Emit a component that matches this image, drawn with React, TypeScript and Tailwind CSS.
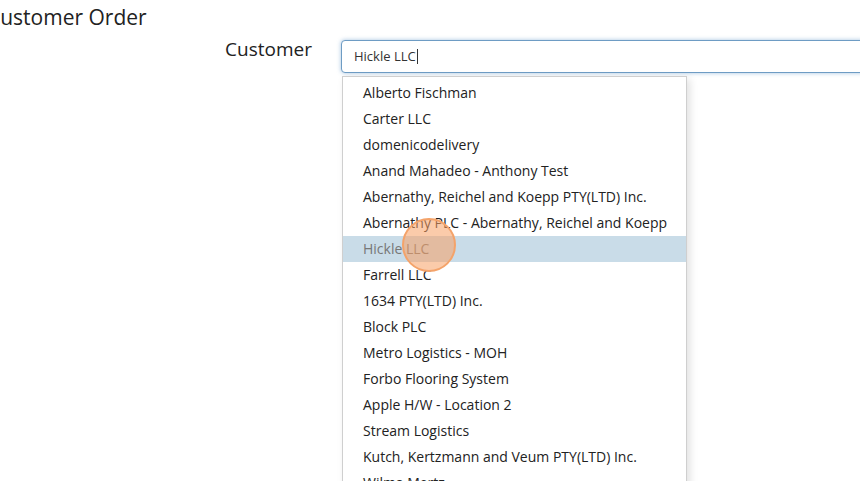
import React from 'react';

const customers = [
  'Alberto Fischman',
  'Carter LLC',
  'domenicodelivery',
  'Anand Mahadeo - Anthony Test',
  'Abernathy, Reichel and Koepp PTY(LTD) Inc.',
  'Abernathy PLC - Abernathy, Reichel and Koepp',
  'Hickle LLC',
  'Farrell LLC',
  '1634 PTY(LTD) Inc.',
  'Block PLC',
  'Metro Logistics - MOH',
  'Forbo Flooring System',
  'Apple H/W - Location 2',
  'Stream Logistics',
  'Kutch, Kertzmann and Veum PTY(LTD) Inc.',
  'Wilms-Mertz',
  'Greenholt Group',
];

export default function App() {
  return (
    <div className="relative h-[481px] w-[860px] overflow-hidden bg-white text-[#333] font-['Open_Sans',sans-serif]">
      {/* Title */}
      <h1 className="-ml-[13px] pt-[3px] text-[21px] leading-[28px] text-[#222]">Customer Order</h1>

      {/* Form row */}
      <div className="mt-[9px] flex items-start">
        <label className="w-[312px] shrink-0 text-right text-[19px] leading-[18px] text-[#222]">Customer</label>
        <div className="relative ml-[29px] shrink-0">
          <div className="flex h-[33px] w-[560px] items-center rounded-[4px] border border-[#6e9cc4] bg-white px-[12px] text-[13px] text-[#333] shadow-[0_0_4px_rgba(102,153,204,0.6)]">
            <span>Hickle LLC</span>
            <span className="ml-px h-[15px] w-px bg-[#333]" />
          </div>

          {/* Suggestions */}
          <ul className="absolute left-[1px] top-[36px] w-[345px] border border-[#cfcfcf] bg-white pt-[3px] shadow-[3px_3px_8px_rgba(0,0,0,0.12)]">
            {customers.map((c) => (
              <li
                key={c}
                className={
                  'h-[26px] pl-[20px] text-[14px] leading-[26px] whitespace-nowrap ' +
                  (c === 'Hickle LLC' ? 'bg-[#c9dce8] text-[#777]' : 'text-[#222]')
                }
              >
                {c}
              </li>
            ))}
          </ul>
        </div>
      </div>

      {/* Click marker */}
      <div className="absolute left-[402px] top-[218px] h-[54px] w-[54px] rounded-full border-2 border-[#f4a36a] bg-[rgba(247,160,100,0.55)]" />
    </div>
  );
}
